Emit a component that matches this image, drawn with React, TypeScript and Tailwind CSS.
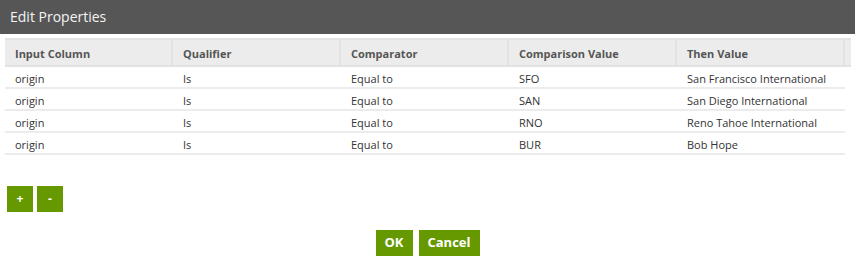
const columns = ["Input Column", "Qualifier", "Comparator", "Comparison Value", "Then Value"];

const rows = [
	["origin", "Is", "Equal to", "SFO", "San Francisco International"],
	["origin", "Is", "Equal to", "SAN", "San Diego International"],
	["origin", "Is", "Equal to", "RNO", "Reno Tahoe International"],
	["origin", "Is", "Equal to", "BUR", "Bob Hope"],
];

const App: React.FC = () => {
	return (
		<div
			className="w-[855px] h-[263px] bg-white text-[#333]"
			style={{ fontFamily: '"Open Sans", "Noto Sans", sans-serif' }}>
			<div className="h-[34px] bg-[#565656] flex items-center pl-[10px] pb-[2px] text-[14px] text-[#f4f4f4]">
				Edit Properties
			</div>
			<div className="pl-[5px] pr-[4px] pt-[4px]">
				<div className="flex h-[29px] bg-[#ececec] border-t-2 border-b-2 border-[#e2e2e2]">
					{columns.map((col) => (
						<div
							key={col}
							className="w-[168px] flex items-center pl-[10px] pt-[4px] border-r-2 border-[#e2e2e2] text-[11px] font-bold text-[#555]">
							{col}
						</div>
					))}
					<div className="flex-1" />
				</div>
				<div className="w-[840px]">
					{rows.map((row, i) => (
						<div key={i} className="flex h-[22px] border-b-2 border-[#ececec]">
							{row.map((cell, j) => (
								<div
									key={j}
									className="w-[168px] flex items-center pl-[10px] pt-[4px] text-[11px]">
									{cell}
								</div>
							))}
						</div>
					))}
				</div>
			</div>
			<div className="flex gap-[4px] pl-[7px] mt-[31px]">
				<button className="w-[26px] h-[26px] bg-[#669900] text-white text-[12px] font-bold">
					+
				</button>
				<button className="w-[26px] h-[26px] bg-[#669900] text-white text-[12px] font-bold">
					-
				</button>
			</div>
			<div className="flex justify-center gap-[6px] mt-[18px]">
				<button className="w-[37px] h-[26px] bg-[#669900] text-white text-[13px] font-bold">
					OK
				</button>
				<button className="w-[61px] h-[26px] bg-[#669900] text-white text-[13px] font-bold">
					Cancel
				</button>
			</div>
		</div>
	);
};

export default App;
